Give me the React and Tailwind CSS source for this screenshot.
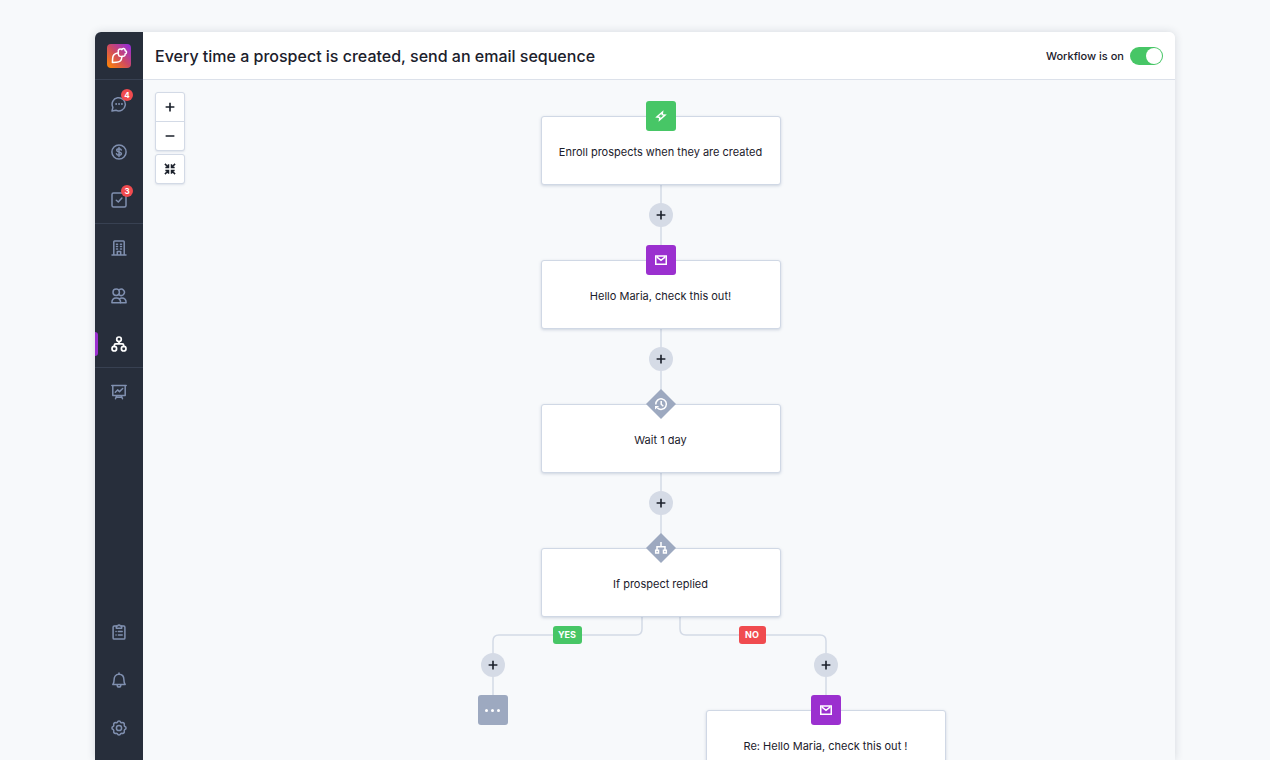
import React, { useState } from "react";

function Icon({ children, size = 16, stroke = 1.5 }) {
  return (
    <svg
      width={size}
      height={size}
      viewBox="0 0 16 16"
      fill="none"
      stroke="currentColor"
      strokeWidth={stroke}
      strokeLinecap="round"
      strokeLinejoin="round"
      aria-hidden="true"
    >
      {children}
    </svg>
  );
}

const ChatIcon = () => (
  <Icon>
    <path d="M1 15l.9-3.6A6.6 6.6 0 1 1 5 14.3L1 15z" />
    <path d="M5.100 8h.1M8 8h.1M10.900 8h.1" strokeWidth="1.800" />
  </Icon>
);

const DollarIcon = () => (
  <Icon>
    <circle cx="8" cy="8" r="7.100" />
    <path d="M10.300 6.100C10 5.200 9.100 4.800 8 4.800c-1.300 0-2.300.500-2.300 1.500 0 2.300 4.700 1 4.700 3.300 0 1-1.100 1.600-2.400 1.600s-2.200-.6-2.500-1.500M8 3.500v9" />
  </Icon>
);

const TaskIcon = () => (
  <Icon>
    <rect x="1" y="1" width="14" height="14" rx="1.500" />
    <path d="M5.300 8.300l2 1.700 3.600-4" />
  </Icon>
);

const BuildingIcon = () => (
  <Icon>
    <path d="M1 15h14M2.800 15V1.800C2.800 1.300 3.100 1 3.600 1h8.800c.5 0 .8.3.8.8V15M6.300 15v-3.600h3.400V15" />
    <path d="M5.500 4.200h1M9.500 4.200h1M5.500 6.600h1M9.500 6.600h1M5.500 9h1M9.500 9h1" />
  </Icon>
);

const PeopleIcon = () => (
  <Icon>
    <circle cx="5.200" cy="4.300" r="3.200" />
    <path d="M8.300 1.700a3.200 3.200 0 1 1 0 5.200" />
    <path d="M.9 14.800c0-3 1.700-4.800 4.300-4.800s4.400 1.800 4.400 4.800z" />
    <path d="M8.600 10.600c.7-.4 1.400-.6 2.200-.6 2.600 0 4.300 1.800 4.300 4.800H9.600" />
  </Icon>
);

const WorkflowIcon = () => (
  <Icon stroke={1.7}>
    <circle cx="8" cy="3.300" r="2.300" />
    <circle cx="3.300" cy="12.700" r="2.300" />
    <circle cx="12.700" cy="12.700" r="2.300" />
    <path d="M8 5.600v2.300M3.300 10.400V9.300c0-.8.6-1.400 1.400-1.400h6.600c.8 0 1.400.6 1.400 1.400v1.100" />
  </Icon>
);

const ReportIcon = () => (
  <Icon>
    <path d="M.8 1.600h14.400M1.800 1.600v9.800h12.400V1.600M5.800 11.500l-1.300 3.200M10.200 11.500l1.300 3.200M5.200 13.300h5.600" />
    <path d="M4.300 8.300l2.300-2.400 1.900 1.700 3.200-3.100" />
  </Icon>
);

const ClipboardIcon = () => (
  <Icon>
    <path d="M5.300 2.100H3.200c-.7 0-1.100.5-1.100 1.100v10.700c0 .7.400 1.100 1.100 1.100h9.600c.7 0 1.100-.4 1.100-1.100V3.200c0-.6-.4-1.100-1.100-1.100h-2.100" />
    <path d="M5.300 1.900h1.400a1.400 1.400 0 0 1 2.600 0h1.400v2.300H5.300z" />
    <path d="M5 7.600h.1M7.400 7.600h3.800M5 11h.1M7.400 11h3.800" />
  </Icon>
);

const BellIcon = () => (
  <Icon>
    <path d="M1.800 12.500h12.400c-1-1-1.300-2-1.300-4.700 0-3-1.500-5.600-4.900-5.600S3.100 4.800 3.100 7.800c0 2.700-.3 3.700-1.300 4.700z" />
    <path d="M8 2.100V1M6.200 13.200a1.800 1.800 0 0 0 3.600 0" />
  </Icon>
);

const GearIcon = () => (
  <Icon>
    <circle cx="8" cy="8" r="2.600" />
    <path d="M6.400 2.200a1.650 1.650 0 0 1 3.200 0 1.650 1.650 0 0 0 1.400.6 1.650 1.650 0 0 1 2.200 2.200 1.650 1.650 0 0 0 .6 1.400 1.650 1.650 0 0 1 0 3.200 1.650 1.650 0 0 0-.6 1.400 1.650 1.650 0 0 1-2.200 2.200 1.650 1.650 0 0 0-1.400.6 1.650 1.650 0 0 1-3.200 0 1.650 1.650 0 0 0-1.400-.6 1.650 1.650 0 0 1-2.200-2.200 1.650 1.650 0 0 0-.6-1.400 1.650 1.650 0 0 1 0-3.200 1.650 1.650 0 0 0 .6-1.400A1.650 1.650 0 0 1 5 2.800a1.650 1.650 0 0 0 1.400-.6z" />
  </Icon>
);

const Logo = () => (
  <svg width="24" height="24" viewBox="0 0 24 24" fill="none" aria-hidden="true">
    <defs>
      <linearGradient id="logo" x1="2" y1="22" x2="22" y2="2" gradientUnits="userSpaceOnUse">
        <stop offset="0" stopColor="#f97f0f" />
        <stop offset="0.5" stopColor="#cf4a62" />
        <stop offset="1" stopColor="#9a2fcf" />
      </linearGradient>
    </defs>
    <rect width="24" height="24" rx="4" fill="url(#logo)" />
    <g stroke="#fff" strokeWidth="1.500" strokeLinejoin="round" strokeLinecap="round">
      <path d="M12 11.900c-.9-1.300-1-2.900-.6-3.900-.6-1.700.4-3.100 1.900-3.100.7 0 1.200.3 1.500.8.400-.9 1.200-1.300 2-1.100 1 .2 1.500 1.100 1.300 2.100 1 .1 1.500.9 1.400 1.800-.1.800-.6 1.300-1.400 1.500.3 1.500-.8 2.500-2.400 2.300-1.300.5-2.600.3-3.700-.4z" />
      <path d="M10.700 9.100C7.600 9.500 5.700 11.700 5.600 14.700L5.400 18.500l3.900-.2c3.200-.1 5.400-2.200 5.600-5.300" />
    </g>
  </svg>
);

const PlusIcon = () => (
  <Icon size={10} stroke={2.600}>
    <path d="M8 1v14M1 8h14" strokeLinecap="butt" />
  </Icon>
);

const MinusIcon = () => (
  <Icon size={10} stroke={2.600}>
    <path d="M1 8h14" strokeLinecap="butt" />
  </Icon>
);

const CollapseIcon = () => (
  <Icon size={12} stroke={2}>
    <path
      strokeLinecap="butt"
      strokeLinejoin="miter"
      d="M1.200 1.200L6 6M6 1.800V6H1.800M14.800 1.200L10 6M10 1.800V6h4.200M1.200 14.800L6 10M6 14.200V10H1.800M14.800 14.800L10 10M10 14.200V10h4.200"
    />
  </Icon>
);

const BoltIcon = () => (
  <svg width="12" height="12" viewBox="0 0 12 12" aria-hidden="true">
    <path
      fill="#fff"
      fillRule="evenodd"
      d="M8.500.2L8 4.200l3.800.400L3.600 11.700 4 7.900.2 7.400zM6.600 3.700L3.400 6.400l2.100.3-.1 1.600 3.100-2.700-2.100-.3z"
    />
  </svg>
);

const MailIcon = () => (
  <svg width="12" height="12" viewBox="0 0 12 12" fill="none" stroke="#fff" strokeWidth="1.500" aria-hidden="true">
    <path d="M.75 1.900h10.500v8.300H.75zM2 3.200l4 3.200 4-3.200" />
  </svg>
);

const ClockIcon = () => (
  <svg width="14" height="14" viewBox="0 0 14 14" fill="none" stroke="#fff" strokeWidth="1.500" aria-hidden="true">
    <path d="M1.800 7.500A5.300 5.300 0 1 1 3.400 10.900M7.200 4v3.300l2.100 2" />
    <path d="M1 8.900h4.200L1 12.400z" fill="#fff" stroke="none" />
  </svg>
);

const BranchIcon = () => (
  <svg width="14" height="14" viewBox="0 0 14 14" fill="none" stroke="#fff" strokeWidth="1.500" aria-hidden="true">
    <path d="M7 1v4.500M3 9V5.700h8V9M1.700 9.200h2.800V12H1.700zM9.500 9.200h2.800V12H9.500z" />
  </svg>
);

const topGroups = [
  [
    { label: "Conversations", icon: ChatIcon, badge: "4" },
    { label: "Deals", icon: DollarIcon },
    { label: "Tasks", icon: TaskIcon, badge: "3" },
  ],
  [
    { label: "Companies", icon: BuildingIcon },
    { label: "Prospects", icon: PeopleIcon },
    { label: "Workflows", icon: WorkflowIcon, active: true },
  ],
  [{ label: "Reports", icon: ReportIcon }],
];

const bottomItems = [
  { label: "Activity", icon: ClipboardIcon },
  { label: "Notifications", icon: BellIcon },
  { label: "Settings", icon: GearIcon },
];

function NavItem({ label, icon: Glyph, badge, active }) {
  return (
    <li className="relative flex h-12">
      <a
        href="#"
        aria-label={label}
        aria-current={active ? "page" : undefined}
        className={`flex flex-1 items-center justify-center ${active ? "text-white" : "text-[#8090b0]"}`}
      >
        <Glyph />
      </a>
      {active && <span className="absolute left-0 top-3 h-6 w-[3px] rounded-r-sm bg-[#9b30cf]" />}
      {badge && (
        <span className="absolute right-[10px] top-[9px] flex size-3 items-center justify-center rounded-full bg-[#f04b4f] text-[8px] font-bold leading-none text-white">
          {badge}
        </span>
      )}
    </li>
  );
}

function Sidebar() {
  return (
    <nav className="flex w-12 shrink-0 flex-col rounded-tl-md bg-[#272e3b] pb-2">
      <a href="#" aria-label="Home" className="flex h-12 items-center justify-center border-b border-[#384152]">
        <Logo />
      </a>
      {topGroups.map((items, i) => (
        <ul key={i} className={i < 2 ? "h-36 border-b border-[#384152]" : ""}>
          {items.map((item) => (
            <NavItem key={item.label} {...item} />
          ))}
        </ul>
      ))}
      <ul className="mt-auto">
        {bottomItems.map((item) => (
          <NavItem key={item.label} {...item} />
        ))}
      </ul>
    </nav>
  );
}

/* Diagram coordinates: the origin is the top left corner of the trunk column. */
const steps = [
  { x: 0, y: 36, text: "Enroll prospects when they are created", shape: "green", icon: BoltIcon },
  { x: 0, y: 180, text: "Hello Maria, check this out!", shape: "purple", icon: MailIcon },
  { x: 0, y: 324, text: "Wait 1 day", shape: "diamond", icon: ClockIcon },
  { x: 0, y: 468, text: "If prospect replied", shape: "diamond", icon: BranchIcon },
  { x: 165, y: 630, text: "Re: Hello Maria, check this out !", shape: "purple", icon: MailIcon },
];

const adders = [
  { x: 108, y: 123 },
  { x: 108, y: 267 },
  { x: 108, y: 411 },
  { x: -60, y: 573 },
  { x: 273, y: 573 },
];

function StepBadge({ shape, icon: Glyph }) {
  if (shape === "diamond") {
    return (
      <span className="relative flex size-[30px] items-center justify-center">
        <svg className="absolute inset-0" width="30" height="30" viewBox="0 0 30 30" aria-hidden="true">
          <path d="M15 0l15 15-15 15L0 15z" fill="#9da9c0" />
        </svg>
        <span className="relative">
          <Glyph />
        </span>
      </span>
    );
  }
  return (
    <span
      className={`flex size-[30px] items-center justify-center rounded-[3px] ${
        shape === "green" ? "bg-[#47c666]" : "bg-[#9b30cf]"
      }`}
    >
      <Glyph />
    </span>
  );
}

function Step({ x, y, text, shape, icon }) {
  return (
    <div
      className="absolute flex h-[69px] w-[240px] items-center justify-center rounded-[3px] border border-[#d0d8e5] bg-white pt-0.5 shadow-[0_1px_3px_rgba(80,100,140,0.25)]"
      style={{ left: x, top: y }}
    >
      <div className="absolute inset-x-0 -top-4 flex justify-center">
        <StepBadge shape={shape} icon={icon} />
      </div>
      <p className="text-[11px] leading-4">{text}</p>
    </div>
  );
}

function Diagram() {
  return (
    <div className="relative mx-auto h-full w-[240px] text-[#1b202b]">
      <svg
        className="absolute left-0 top-0 overflow-visible"
        width="240"
        height="680"
        fill="none"
        stroke="#d3dae6"
        strokeWidth="1.500"
        aria-hidden="true"
      >
        <path d="M120 105v75M120 249v75M120 393v75" />
        <path d="M101 537v12q0 6-6 6H-42q-6 0-6 6v54" />
        <path d="M139 537v12q0 6 6 6H279q6 0 6 6v54" />
      </svg>
      {steps.map((step) => (
        <Step key={step.text} {...step} />
      ))}
      {adders.map(({ x, y }) => (
        <button
          key={`${x}-${y}`}
          type="button"
          aria-label="Add step"
          className="absolute flex size-6 items-center justify-center rounded-full bg-[#d5dbe6]"
          style={{ left: x, top: y }}
        >
          <PlusIcon />
        </button>
      ))}
      <span className="absolute left-3 top-[546px] flex h-[18px] w-[29px] items-center justify-center rounded-[3px] bg-[#47c666] text-[9px] font-bold text-white">
        YES
      </span>
      <span className="absolute left-[198px] top-[546px] flex h-[18px] w-[27px] items-center justify-center rounded-[3px] bg-[#f04b4f] text-[9px] font-bold text-white">
        NO
      </span>
      <button
        type="button"
        aria-label="More steps"
        className="absolute -left-[63px] top-[615px] flex size-[30px] items-center justify-center gap-[3px] rounded-[3px] bg-[#9da9c0]"
      >
        <span className="size-[3px] rounded-full bg-white" />
        <span className="size-[3px] rounded-full bg-white" />
        <span className="size-[3px] rounded-full bg-white" />
      </button>
    </div>
  );
}

const control = "flex h-7 w-7 items-center justify-center bg-white";
const controlBox =
  "flex flex-col gap-px overflow-hidden rounded-[3px] border border-[#d3dae6] bg-[#d3dae6] shadow-[0_1px_2px_rgba(80,100,140,0.15)]";

export default function App() {
  const [on, setOn] = useState(true);
  return (
    <div className="flex h-screen overflow-hidden bg-[#f7f9fb] px-[95px] pt-8 font-['Inter','Liberation_Sans',sans-serif] text-[#1b202b]">
      <div className="flex min-w-0 flex-1 rounded-t-md shadow-[0_0_8px_rgba(40,50,70,0.16)]">
        <Sidebar />
        <div className="flex min-w-0 flex-1 flex-col">
          <header className="flex h-12 shrink-0 items-center justify-between rounded-tr-md border-b border-[#dce1ea] bg-white px-3">
            <h1 className="text-[16px] font-medium leading-6">
              Every time a prospect is created, send an email sequence
            </h1>
            <label className="flex items-center gap-1.5 text-[11px] font-medium leading-[18px]">
              Workflow is on
              <input
                type="checkbox"
                role="switch"
                checked={on}
                onChange={(e) => setOn(e.target.checked)}
                className="flex h-[18px] w-[33px] appearance-none items-center rounded-full bg-[#b8c1d1] px-px before:size-4 before:rounded-full before:bg-white checked:justify-end checked:bg-[#47c666]"
              />
            </label>
          </header>
          <main className="relative min-h-0 flex-1 overflow-hidden bg-[#f7f9fb] pl-[3px]">
            <div className="absolute left-3 top-3 z-10 flex flex-col gap-[3px]">
              <div className={controlBox}>
                <button type="button" aria-label="Zoom in" className={control}>
                  <PlusIcon />
                </button>
                <button type="button" aria-label="Zoom out" className={control}>
                  <MinusIcon />
                </button>
              </div>
              <div className={controlBox}>
                <button type="button" aria-label="Fit to screen" className={control}>
                  <CollapseIcon />
                </button>
              </div>
            </div>
            <Diagram />
          </main>
        </div>
      </div>
    </div>
  );
}
